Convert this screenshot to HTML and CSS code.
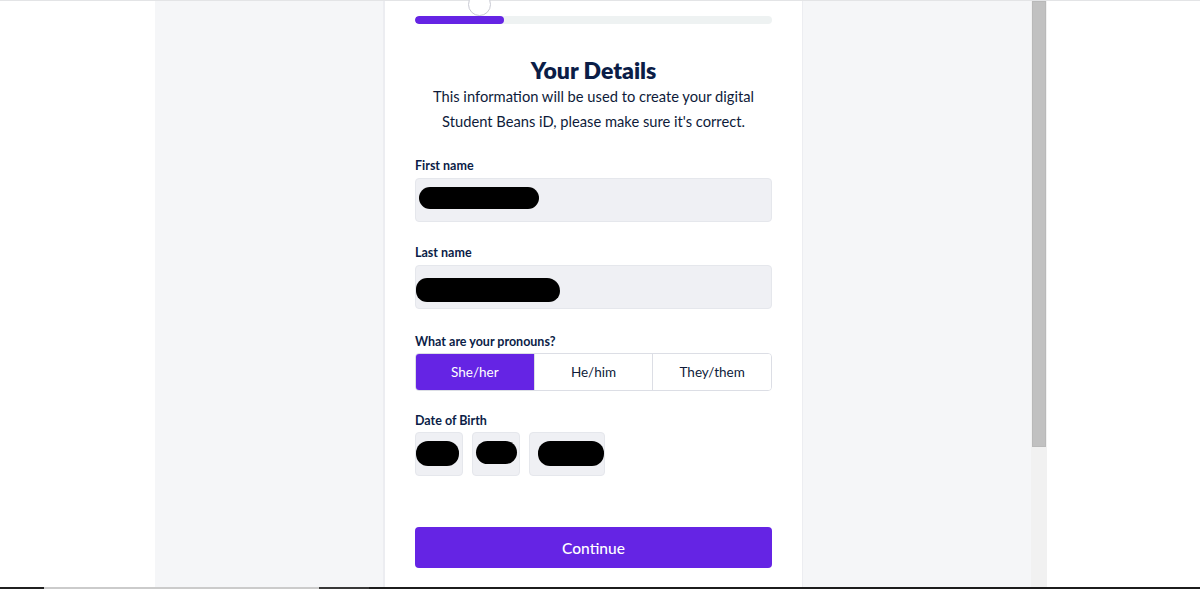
FILE: index.html
```html
<!DOCTYPE html>
<html lang="en">
<head>
<meta charset="utf-8">
<title>Your Details</title>
<link rel="stylesheet" href="styles.css">
</head>
<body>
<div class="topline"></div>
<div class="main">
  <div class="side-white left"></div>
  <div class="panel"></div>
  <div class="card">
    <span class="step-dot"></span>
    <div class="progress"><div class="progress-fill"></div></div>
    <h1 class="title">Your Details</h1>
    <p class="subtitle">This information will be used to create your digital<br>Student Beans iD, please make sure it's correct.</p>

    <label class="label">First name</label>
    <div class="input"><span class="redact r-first"></span></div>

    <label class="label label-last">Last name</label>
    <div class="input"><span class="redact r-last"></span></div>

    <label class="label label-tight">What are your pronouns?</label>
    <div class="segment">
      <div class="seg active">She/her</div>
      <div class="seg">He/him</div>
      <div class="seg">They/them</div>
    </div>

    <label class="label label-tight label-dob">Date of Birth</label>
    <div class="dob">
      <div class="dob-box d-day"><span class="redact r-day"></span></div>
      <div class="dob-box d-month"><span class="redact r-month"></span></div>
      <div class="dob-box d-year"><span class="redact r-year"></span></div>
    </div>

    <button class="continue">Continue</button>
  </div>
  <div class="panel right"></div>
  <div class="scrollbar"><div class="thumb"></div></div>
  <div class="side-white"></div>
</div>
<div class="taskbar">
  <span class="tb a"></span><span class="tb b"></span><span class="tb c"></span><span class="tb d"></span>
</div>
</body>
</html>
```

FILE: styles.css
```css
* { box-sizing: border-box; }
html, body { margin: 0; padding: 0; }
body {
  width: 1200px;
  height: 589px;
  overflow: hidden;
  background: #ffffff;
  font-family: "Lato", "Noto Sans", sans-serif;
  color: #0c1d45;
  display: flex;
  flex-direction: column;
}
.topline { height: 1px; background: #e3e4e6; flex: none; }
.main { display: flex; height: 586px; flex: none; }
.side-white { width: 153px; background: #fff; flex: none; }
.side-white.left { width: 155px; }
.panel { width: 230px; background: #f5f6f8; border-right: 2px solid #ecedf1; flex: none; }
.panel.right { width: 229px; border-right: none; border-left: 1px solid #ecedf1; }
.card {
  position: relative;
  width: 417px;
  flex: none;
  background: #fff;
  padding: 15px 30px 0;
  display: flex;
  flex-direction: column;
}
.step-dot {
  position: absolute;
  left: 83px;
  top: -8px;
  width: 23px;
  height: 23px;
  border-radius: 50%;
  background: #fff;
  border: 1.5px solid #c9cad3;
}
.progress { height: 8px; border-radius: 4px; background: #eef2f2; overflow: hidden; }
.progress-fill { width: 89px; height: 100%; border-radius: 4px; background: #6524e4; }
.title {
  margin: 32px 0 0;
  font-size: 23px;
  line-height: 28px;
  font-weight: 800;
  text-align: center;
  color: #0b1d47;
}
.subtitle {
  margin: 0;
  font-size: 14.7px;
  line-height: 25px;
  text-align: center;
  color: #0e1b3a;
}
.label {
  display: block;
  font-size: 12.5px;
  font-weight: 700;
  line-height: 16px;
  margin: 24px 0 4px;
  color: #0b1d47;
}
.label-last { margin-top: 23px; }
.label-tight { margin-top: 25px; margin-bottom: 3px; }
.label-dob { margin-top: 22px; }
.input {
  height: 44px;
  background: #eff0f4;
  border: 1px solid #e5e7ec;
  border-radius: 4px;
  position: relative;
}
.redact { position: absolute; background: #000; border-radius: 12px; }
.r-first { left: 3px; top: 8px; width: 120px; height: 22px; }
.r-last { left: 0px; top: 12px; width: 144px; height: 24px; border-radius: 12px 14px 12px 12px; }
.segment {
  display: flex;
  height: 38px;
  border: 1px solid #dcdee5;
  border-radius: 4px;
  overflow: hidden;
}
.seg {
  flex: 1;
  display: flex;
  align-items: center;
  justify-content: center;
  font-size: 13.5px;
  color: #0e1b3a;
  background: #fff;
  border-left: 1px solid #dcdee5;
}
.seg:first-child { border-left: none; }
.seg.active { background: #6524e4; color: #fff; }
.dob { display: flex; gap: 9px; }
.dob-box {
  position: relative;
  height: 44px;
  background: #eff0f4;
  border: 1px solid #e5e7ec;
  border-radius: 4px;
}
.d-day { width: 48px; }
.d-month { width: 48px; }
.d-year { width: 76px; }
.r-day { left: 0; top: 8px; width: 43px; height: 25px; border-radius: 12px; }
.r-month { left: 3px; top: 8px; width: 41px; height: 23px; }
.r-year { left: 8px; top: 8px; width: 66px; height: 25px; }
.continue {
  margin-top: 51px;
  height: 41px;
  width: 100%;
  border: none;
  border-radius: 4px;
  background: #6524e4;
  color: #fff;
  font-family: "Lato", "Noto Sans", sans-serif;
  font-size: 15.5px;
  font-weight: 500;
}
.scrollbar { width: 16px; background: #f1f1f1; flex: none; padding-left: 1px; }
.thumb { width: 14px; height: 446px; background: #c1c1c1; border: 1px solid #b9b9b9; }
.taskbar { height: 2px; flex: none; display: flex; }
.tb { display: block; height: 100%; }
.tb.a { width: 44px; background: #202020; }
.tb.b { width: 275px; background: #cbcbcb; }
.tb.c { width: 50px; background: #383838; }
.tb.d { flex: 1; background: #1c1c1c; }
```
